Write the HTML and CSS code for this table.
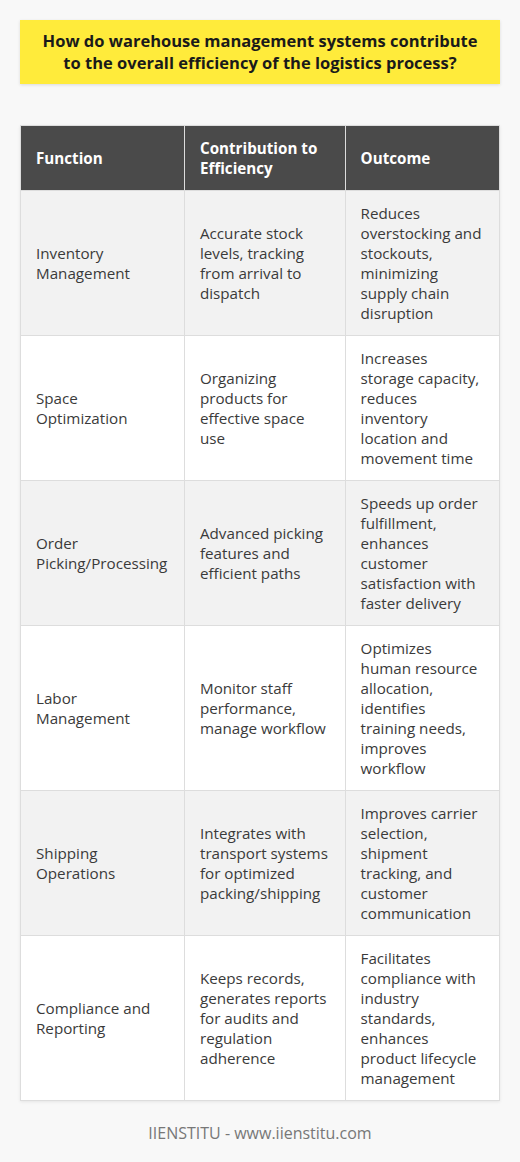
FILE: index.html
```html
<!DOCTYPE html>
<html>
<head>
<meta charset="utf-8">
<link rel="stylesheet" href="styles.css">
</head>
<body>
<div class="page">
  <div class="title">How do warehouse management systems contribute to the overall efficiency of the logistics process?</div>
  <table class="grid">
    <colgroup>
      <col class="c1"><col class="c2"><col class="c3">
    </colgroup>
    <thead>
      <tr><th>Function</th><th>Contribution to Efficiency</th><th>Outcome</th></tr>
    </thead>
    <tbody>
      <tr><td>Inventory Management</td><td>Accurate stock levels, tracking from arrival to dispatch</td><td>Reduces overstocking and stockouts, minimizing supply chain disruption</td></tr>
      <tr><td>Space Optimization</td><td>Organizing products for effective space use</td><td>Increases storage capacity, reduces inventory location and movement time</td></tr>
      <tr><td>Order Picking/Processing</td><td>Advanced picking features and efficient paths</td><td>Speeds up order fulfillment, enhances customer satisfaction with faster delivery</td></tr>
      <tr><td>Labor Management</td><td>Monitor staff performance, manage workflow</td><td>Optimizes human resource allocation, identifies training needs, improves workflow</td></tr>
      <tr><td>Shipping Operations</td><td>Integrates with transport systems for optimized packing/shipping</td><td>Improves carrier selection, shipment tracking, and customer communication</td></tr>
      <tr><td>Compliance and Reporting</td><td>Keeps records, generates reports for audits and regulation adherence</td><td>Facilitates compliance with industry standards, enhances product lifecycle management</td></tr>
    </tbody>
  </table>
  <div class="footer">IIENSTITU - www.iienstitu.com</div>
</div>
</body>
</html>
```

FILE: styles.css
```css
html, body {
  margin: 0;
  padding: 0;
  background: #f8f8f8;
}
body {
  font-family: "Open Sans", "Liberation Sans", sans-serif;
  color: #333;
}
.page {
  padding: 20px;
  display: flex;
  flex-direction: column;
}
.title {
  background: #ffeb3b;
  color: #1a1a1a;
  font-weight: 700;
  font-size: 16.5px;
  line-height: 22px;
  text-align: center;
  padding: 10px 16px;
  box-shadow: 0 1px 3px rgba(0,0,0,0.12);
}
.grid {
  margin-top: 41px;
  width: 480px;
  border-collapse: collapse;
  font-size: 15.2px;
  line-height: 20px;
  background: #fff;
  box-shadow: 0 1px 3px rgba(0,0,0,0.08);
}
.c1 { width: 164px; }
.c2 { width: 161px; }
.c3 { width: 155px; }
.grid th, .grid td {
  border: 1px solid #ddd;
  padding: 12px 16px 12px 15px;
  text-align: left;
  vertical-align: middle;
}
.grid th {
  background: #4a4a4a;
  color: #fff;
  font-weight: 700;
}
.grid tbody tr:nth-child(odd) td {
  background: #f2f2f2;
}
.grid tbody tr:nth-child(even) td {
  background: #fff;
}
.grid td {
  color: #3a3a3a;
}
.footer {
  text-align: center;
  color: #777;
  font-size: 16px;
  line-height: 22px;
  margin-top: 21px;
}
```
